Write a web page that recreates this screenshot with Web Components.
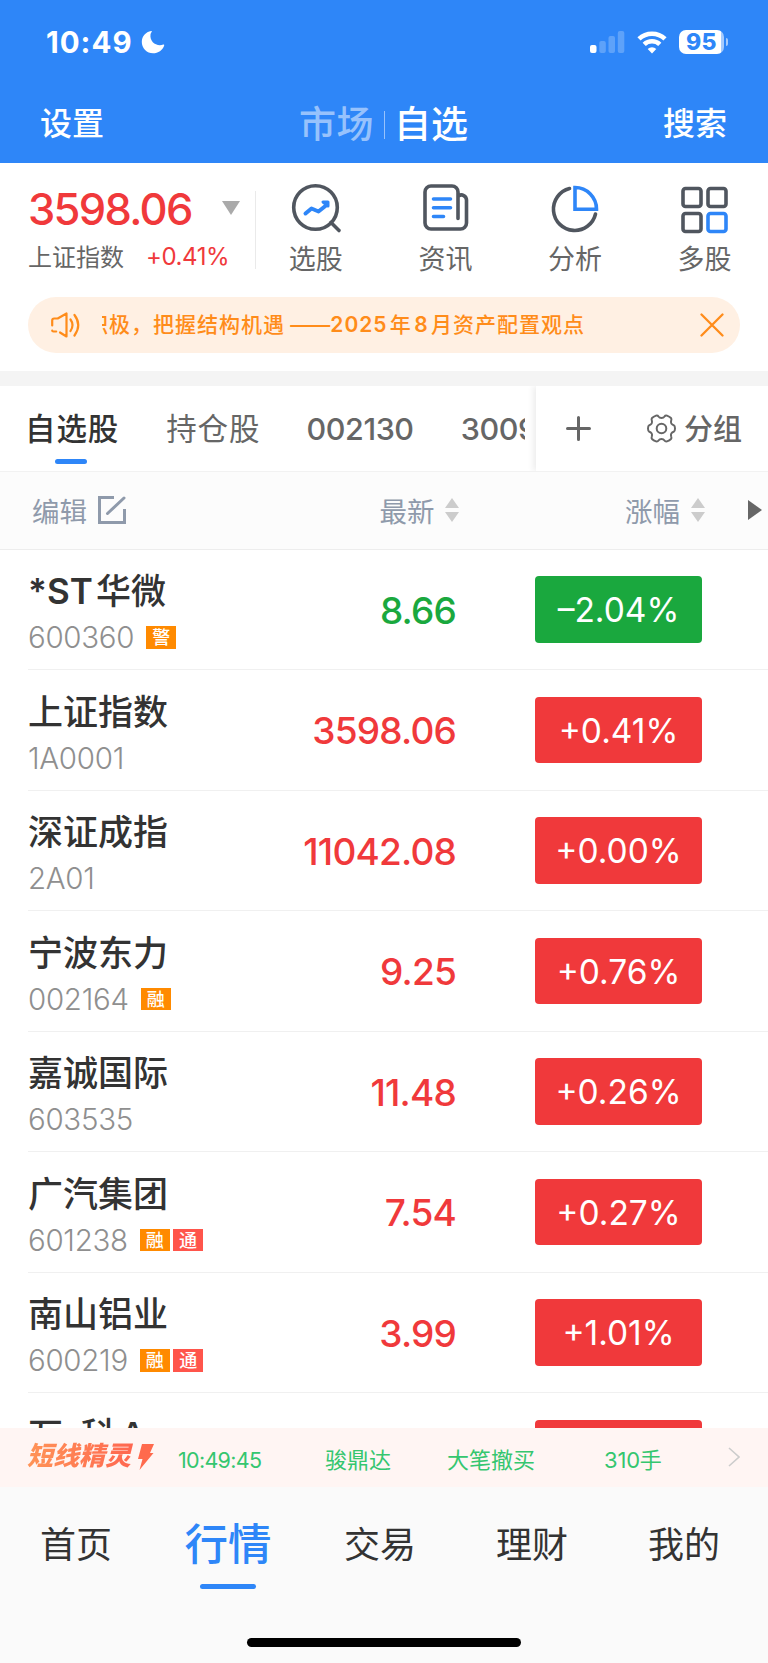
<!DOCTYPE html>
<html lang="zh-CN">
<head>
<meta charset="utf-8">
<title>自选</title>
<style>
  body {
    margin: 0;
    background: #fff;
    font-family: Inter, "Noto Sans CJK SC", sans-serif;
    color: #333;
  }
</style>
</head>
<body>
<stock-app></stock-app>

<script>
"use strict";

// Attach an open shadow root filled from a template
function render(host, html) {
  const template = document.createElement("template");
  template.innerHTML = html;
  host.attachShadow({ mode: "open" });
  host.shadowRoot.appendChild(template.content.cloneNode(true));
}

class StatusBar extends HTMLElement {
  constructor() {
    super();
    render(this, `
      <style>
      :host {
        display: flex;
        align-items: center;
        height: 84px;
        padding: 0 40px 0 46px;
        box-sizing: border-box;
        color: #fff;
      }
      #time {
        font-size: 29.500px;
        font-weight: 700;
        line-height: 36px;
        letter-spacing: 1px;
        margin-right: 8px;
      }
      #icons {
        display: flex;
        align-items: center;
        margin-left: auto;
      }
      #signal { margin-right: 12px; }
      #wifi { margin-right: 12px; }
      #battery {
        width: 45px;
        height: 24px;
        border-radius: 7px;
        background: linear-gradient(90deg, #fff 42px, #a6cbfd 42px);
        color: #2e86f8;
        font-size: 23px;
        font-weight: 800;
        line-height: 24px;
        text-align: center;
        letter-spacing: 0.5px;
      }
      #cap {
        width: 2px;
        height: 8px;
        margin-left: 2px;
        border-radius: 0 3px 3px 0;
        background: #a6cbfd;
      }
      </style>
      <div id="time">10:49</div>
      <svg width="24" height="24" viewBox="0 0 24 24"><path d="M10.2 1C4.6 2 .8 6.500 .8 12a11.200 11.200 0 0 0 11.200 11.200c5.200 0 9.600-3.200 11.200-7.800.2-.7-.3-1-.9-.8C15.500 16.800 8.500 12 9.500 4.500c.1-.9.500-1.700 1.100-2.600.4-.6.200-1-.4-.9z" fill="#fff"/></svg>
      <div id="icons">
        <svg id="signal" width="35" height="22" viewBox="0 0 35 22" fill="#fff">
          <rect x="0" y="14" width="6.500" height="8" rx="2"/>
          <g opacity=".23">
            <rect x="9.300" y="10" width="6.500" height="12" rx="2"/>
            <rect x="18.500" y="5" width="6.500" height="17" rx="2"/>
            <rect x="27.800" y="0" width="6.500" height="22" rx="2"/>
          </g>
        </svg>
        <svg id="wifi" width="30" height="23" viewBox="0 0 30 23" fill="none" stroke="#fff" stroke-width="4.600">
          <path d="M2 7.900a18.800 18.800 0 0 1 26 0"/>
          <path d="M7.200 13.400a11.300 11.300 0 0 1 15.600 0"/>
          <path d="M15 22.500l-4.300-4.400a6.200 6.200 0 0 1 8.600 0z" fill="#fff" stroke="none"/>
        </svg>
        <div id="battery">95</div>
        <div id="cap"></div>
      </div>`);
  }
}

class TopNav extends HTMLElement {
  constructor() {
    super();
    render(this, `
      <style>
      :host {
        display: flex;
        align-items: center;
        justify-content: space-between;
        height: 79px;
        padding: 1px 41px 0 40px;
        box-sizing: border-box;
        color: #fff;
        font-weight: 500;
        font-size: 32px;
        line-height: 48px;
      }
      #switch {
        display: flex;
        align-items: center;
        padding-top: 1px;
        font-size: 37px;
      }
      #market { color: #97c2fc; letter-spacing: 0.5px; }
      #line {
        width: 1px;
        height: 28px;
        margin: 0 9px 0 10px;
        background: #97c2fc;
      }
      </style>
      <div>设置</div>
      <div id="switch">
        <div id="market">市场</div>
        <div id="line"></div>
        <div>自选</div>
      </div>
      <div>搜索</div>`);
  }
}

class QuickLink extends HTMLElement {
  constructor() {
    super();
    render(this, `
      <style>
      :host {
        display: flex;
        flex-direction: column;
        align-items: center;
        width: 129.6px;
        font-size: 27px;
        line-height: 40px;
        color: #666;
      }
      ::slotted(svg) {
        display: block;
        width: 52px;
        height: 52px;
        margin-bottom: 5px;
        fill: none;
        stroke: #50565f;
        stroke-width: 3.6px;
        stroke-linecap: round;
        stroke-linejoin: round;
      }
      </style>
      <slot name="icon"></slot>
      <slot></slot>`);
  }
}

class MarketSummary extends HTMLElement {
  constructor() {
    super();
    render(this, `
      <style>
      :host {
        display: flex;
        height: 134px;
        padding-top: 20px;
        box-sizing: border-box;
        background: #fff;
      }
      #index {
        width: 227px;
        padding-left: 28px;
        border-right: 1px solid #eaeaea;
        height: 78px;
        margin-top: 8px;
        flex: none;
      }
      #value {
        display: flex;
        align-items: center;
        height: 36px;
        color: #f0393b;
        font-size: 43.500px;
        font-weight: 500;
        letter-spacing: -1.700px;
      }
      #value svg { margin: 0 15px 3px auto; }
      #name {
        display: flex;
        align-items: center;
        height: 28px;
        margin-top: 14px;
        font-size: 24px;
        color: #666;
      }
      #name span {
        margin: 2px 0 0 22px;
        color: #f0393b;
        letter-spacing: -0.4px;
      }
      #links { display: flex; margin-left: -5px; }
      </style>
      <div id="index">
        <div id="value">3598.06<svg width="18" height="14"><path d="M0 0h18l-9 14z" fill="#aaa"/></svg></div>
        <div id="name">上证指数<span>+0.41%</span></div>
      </div>
      <div id="links">
        <quick-link>
          <svg slot="icon" viewBox="0 0 52 52"><circle cx="25.500" cy="24.500" r="21.800"/><path d="M41 39.500l8 8"/><path d="M15.500 30.500l6-5 7 3 7.500-6" stroke="#2e86f8" stroke-width="4"/><path d="M33 19h5v4z" stroke="#2e86f8" stroke-width="3"/></svg>
          选股
        </quick-link>
        <quick-link>
          <svg slot="icon" viewBox="0 0 52 52"><path d="M39 35.500V9a6 6 0 0 0-6-6H12a6 6 0 0 0-6 6v31a6 6 0 0 0 6 6h29.500a6 6 0 0 0 6-6V17a5 5 0 0 0-8-4"/><path d="M14.500 16h17M14.500 24.700h17M14.500 33.500h10" stroke="#2e86f8"/></svg>
          资讯
        </quick-link>
        <quick-link>
          <svg slot="icon" viewBox="0 0 52 52"><path d="M20.500 5.500A21.300 21.300 0 1 0 46.500 31"/><path d="M26 4.500v21.800h21.500A21.500 21.500 0 0 0 26 4.500z" stroke="#2e86f8" stroke-linejoin="miter"/></svg>
          分析
        </quick-link>
        <quick-link>
          <svg slot="icon" viewBox="0 0 52 52"><rect x="4" y="5.500" width="18" height="18" rx="2.500"/><rect x="29" y="5.500" width="18" height="18" rx="2.500"/><rect x="4" y="30.500" width="18" height="18" rx="2.500"/><rect x="29" y="30.500" width="18" height="18" rx="2.500" stroke="#2e86f8"/></svg>
          多股
        </quick-link>
      </div>`);
  }
}

class NoticeBar extends HTMLElement {
  constructor() {
    super();
    render(this, `
      <style>
      :host {
        display: flex;
        align-items: center;
        height: 55.500px;
        margin: 0 28px 18.500px;
        padding: 0 16px 0 23px;
        box-sizing: border-box;
        border-radius: 28px;
        background: #fff0e3;
        color: #ff8c1a;
      }
      /* the message scrolls, so its first character is cut by the left edge */
      #clip {
        display: flex;
        width: 500px;
        margin-left: 22px;
        padding-top: 1px;
        overflow: hidden;
        white-space: pre;
        font-size: 21px;
        font-weight: 500;
        line-height: 32px;
        letter-spacing: 1px;
        word-spacing: -4.300px;
      }
      #text { margin-left: -15px; }
      #dash { letter-spacing: -2px; margin: 0 2px 0 3px; }
      .num { font-weight: 600; }
      #close { margin-left: auto; }
      </style>
      <svg width="29" height="26" viewBox="0 0 29 26" fill="none" stroke="#ff8c1a" stroke-width="2.200" stroke-linecap="round" stroke-linejoin="round">
        <path d="M1.200 13.500V8.500q0-2 2-2h3.500L15.500 1.500v23L9 20.500M1.200 18.500q0 1 1.300 1h2.700"/>
        <path d="M19.500 7.500q4 5.500 0 11.500M23.500 3q7.500 10 0 20.500"/>
      </svg>
      <div id="clip"><span id="text">积极，把握结构机遇 <span id="dash">——</span><span class="num">2025</span> 年 <span class="num">8</span> 月资产配置观点</span></div>
      <svg id="close" width="24" height="24" viewBox="0 0 24 24" stroke="#ff8c1a" stroke-width="2.300" stroke-linecap="round"><path d="M1.500 1.500l21 21M22.500 1.500l-21 21"/></svg>`);
  }
}

class GroupTabs extends HTMLElement {
  constructor() {
    super();
    render(this, `
      <style>
      :host {
        display: flex;
        height: 101px;
        border-top: 15px solid #f4f4f4;
        border-bottom: 1px solid #f2f2f2;
        box-sizing: border-box;
        font-size: 30.500px;
        color: #666;
      }
      #tabs {
        display: flex;
        width: 500px;
        padding-left: 25px;
        overflow: hidden;
        line-height: 86px;
        white-space: nowrap;
      }
      #tabs div { flex: none; font-weight: 500; letter-spacing: -0.4px; }
      #tabs .cjk { letter-spacing: 0.9px; font-weight: 400; }
      #tabs .active {
        display: flex;
        flex-direction: column;
        align-items: center;
        color: #333;
        font-weight: 500;
      }
      .active::after {
        content: "";
        width: 32px;
        height: 5px;
        margin: -13px 2px 0 0;
        border-radius: 3px;
        background: #2e86f8;
      }
      #tools {
        display: flex;
        align-items: center;
        width: 232px;
        margin-left: auto;
        padding: 0 26px 0 30px;
        box-sizing: border-box;
        box-shadow: -3px 0 6px rgba(0, 0, 0, 0.07);
        clip-path: inset(0 0 0 -12px);
      }
      #group {
        display: flex;
        align-items: center;
        gap: 8px;
        margin-left: auto;
        font-size: 29px;
        font-weight: 500;
        line-height: 84px;
      }
      #group span { padding-top: 2px; }
      </style>
      <div id="tabs">
        <div class="cjk active">自选股</div>
        <div class="cjk" style="margin-left: 47px">持仓股</div>
        <div style="margin-left: 46px">002130</div>
        <div style="margin-left: 47px">300999</div>
      </div>
      <div id="tools">
        <svg width="25" height="25" viewBox="0 0 25 25" stroke="#666" stroke-width="3" stroke-linecap="round"><path d="M12.500 1.500v22M1.500 12.500h22"/></svg>
        <div id="group">
          <svg width="29" height="29" viewBox="0 0 29 29" fill="none" stroke="#666" stroke-width="2" stroke-linejoin="round">
            <path d="M9 1.600Q10.700 1.200 11.500 2.500Q12.500 4 14.500 4T17.500 2.500Q18.300 1.200 20 1.600Q22.500 2.500 24 4Q24.800 5 24.200 6.500Q23.600 8.500 24.300 9.500Q25.200 10.800 26.700 11.200Q28 11.800 28 14.500T26.700 17.800Q25.200 18.200 24.300 19.500Q23.600 20.500 24.200 22.500Q24.800 24 24 25Q22.500 26.500 20 27.400Q18.300 27.800 17.500 26.500Q16.500 25 14.500 25T11.500 26.500Q10.700 27.800 9 27.400Q6.500 26.500 5 25Q4.200 24 4.800 22.500Q5.400 20.500 4.700 19.500Q3.800 18.200 2.300 17.800Q1 17.200 1 14.500T2.300 11.200Q3.800 10.800 4.700 9.500Q5.400 8.500 4.800 6.500Q4.200 5 5 4Q6.500 2.500 9 1.600z"/>
            <circle cx="14.500" cy="14.500" r="4.800"/>
          </svg>
          <span>分组</span>
        </div>
      </div>`);
  }
}

class ListHeader extends HTMLElement {
  constructor() {
    super();
    const sort = `<svg width="14" height="24" viewBox="0 0 14 24" fill="#ccc"><path d="M7 0l7 10H0zM7 24l7-10H0z"/></svg>`;
    render(this, `
      <style>
      :host {
        display: flex;
        align-items: center;
        height: 77.500px;
        border-bottom: 1.500px solid #ededed;
        padding: 0 6px 0 32px;
        box-sizing: border-box;
        background: #fcfcfc;
        color: #8f9aab;
        font-size: 27.500px;
        line-height: 40px;
      }
      div { display: flex; align-items: center; gap: 10.500px; }
      span { padding-top: 4px; }
      #last { margin-left: auto; }
      #change { margin-left: 166px; }
      #more { margin-left: 43.500px; }
      </style>
      <div><span>编辑</span>
        <svg width="28" height="28" viewBox="0 0 28 28" fill="none" stroke="#8f9aab" stroke-width="3"><path d="M16 1.500H1.500v25h25V13"/><path d="M9.500 17.500L26 2" stroke-linecap="round"/></svg>
      </div>
      <div id="last"><span>最新</span>${sort}</div>
      <div id="change"><span>涨幅</span>${sort}</div>
      <svg id="more" width="14" height="20"><path d="M0 0l14 10L0 20z" fill="#666"/></svg>`);
  }
}

class StockRow extends HTMLElement {
  connectedCallback() {
    const code = this.getAttribute("code") || "";
    const price = this.getAttribute("price") || "";
    const change = this.getAttribute("change") || "";
    const color = change[0] === "-" ? "#1aa83e" : "#f0393b";
    const tags = (this.getAttribute("tags") || "").split("").map(t =>
      `<i class="${t === "通" ? "red" : ""}">${t}</i>`).join("");
    render(this, `
      <style>
      :host {
        display: flex;
        align-items: center;
        height: 120.500px;
        margin-left: 28px;
        padding-right: 66px;
        border-bottom: 1px solid #f0f0f0;
        box-sizing: border-box;
      }
      #stock { width: 200px; padding-top: 5px; }
      #name {
        height: 46px;
        font-size: 35px;
        font-weight: 500;
        line-height: 46px;
        white-space: nowrap;
        word-spacing: -6px;
      }
      ::slotted(b) { font-weight: 600; }
      #code {
        display: flex;
        align-items: center;
        height: 36px;
        margin-top: 5px;
        font-size: 29.500px;
        font-weight: 300;
        letter-spacing: -0.3px;
        color: #8f8f8f;
      }
      i {
        width: 30px;
        height: 22.500px;
        margin-right: 3.300px;
        background: #ff8a00;
        color: #fff;
        font-size: 18px;
        font-style: normal;
        font-weight: 500;
        letter-spacing: 0;
        line-height: 23px;
        text-align: center;
      }
      #code span { margin-right: 12px; }
      .red { background: #ff554b; }
      #price {
        flex: 1;
        padding-top: 2px;
        text-align: right;
        color: ${color};
        font-size: 37px;
        font-weight: 500;
        letter-spacing: -0.8px;
      }
      #change {
        width: 167px;
        height: 66.500px;
        margin-left: 79px;
        border-radius: 4px;
        background: ${color};
        color: #fff;
        font-size: 33.500px;
        font-weight: 400;
        line-height: 68px;
        text-align: center;
      }
      </style>
      <div id="stock">
        <div id="name"><slot></slot></div>
        <div id="code"><span>${code}</span>${tags}</div>
      </div>
      <div id="price">${price}</div>
      <div id="change">${change.replace("-", "–")}</div>`);
  }
}

class StockList extends HTMLElement {
  constructor() {
    super();
    render(this, `
      <style>
      :host {
        display: block;
        height: 878.500px;
        overflow: hidden;
      }
      </style>
      <slot></slot>`);
  }
}

class TradeTicker extends HTMLElement {
  constructor() {
    super();
    render(this, `
      <style>
      :host {
        display: flex;
        align-items: center;
        height: 59px;
        padding: 0 28px;
        box-sizing: border-box;
        background: #fff5f3;
        color: #35c66f;
        font-size: 22px;
        line-height: 32px;
      }
      #brand {
        width: 107px;
        margin: 0 4px 3px -1px;
        font-size: 26px;
        font-weight: 900;
        font-style: italic;
        white-space: nowrap;
        background: linear-gradient(90deg, #ff9457, #ff6650);
        -webkit-background-clip: text;
        background-clip: text;
        color: transparent;
      }
      #bolt { margin-bottom: 2px; }
      #time {
        width: 147px;
        margin: 4px 0 0 24px;
        font-size: 21.500px;
        letter-spacing: -0.7px;
      }
      #stock { width: 122px; margin-top: 4px; }
      #action { width: 157px; margin-top: 4px; }
      #lots { margin-top: 4px; letter-spacing: -0.2px; }
      #arrow { margin-left: auto; margin-bottom: 2px; }
      </style>
      <div id="brand">短线精灵</div>
      <svg id="bolt" width="16" height="27" viewBox="0 0 16 27"><path d="M4 1h12l-4 9h3.500L1.500 27 4.500 16H0z" fill="#ff6a4d"/></svg>
      <div id="time">10:49:45</div>
      <div id="stock">骏鼎达</div>
      <div id="action">大笔撤买</div>
      <div id="lots">310手</div>
      <svg id="arrow" width="12" height="20" viewBox="0 0 12 20" fill="none" stroke="#ccc" stroke-width="1.600"><path d="M1 1l10 9-10 9"/></svg>`);
  }
}

class BottomNav extends HTMLElement {
  constructor() {
    super();
    render(this, `
      <style>
      :host {
        display: flex;
        flex-direction: column;
        justify-content: space-between;
        align-items: center;
        height: 176px;
        padding-bottom: 16px;
        box-sizing: border-box;
        background: #fafafa;
      }
      #items {
        display: flex;
        align-self: stretch;
        padding-right: 8px;
        font-size: 36px;
        line-height: 54px;
      }
      #items div {
        flex: 1;
        display: flex;
        flex-direction: column;
        align-items: center;
        padding-top: 30.500px;
      }
      #items .active {
        padding-top: 29.500px;
        color: #2e86f8;
        font-size: 43.500px;
        font-weight: 500;
      }
      .active::after {
        content: "";
        width: 56px;
        height: 5.500px;
        margin-top: 13px;
        border-radius: 3px;
        background: #2e86f8;
      }
      #home {
        width: 274px;
        height: 9px;
        border-radius: 5px;
        background: #000;
      }
      </style>
      <div id="items">
        <div>首页</div>
        <div class="active">行情</div>
        <div>交易</div>
        <div>理财</div>
        <div>我的</div>
      </div>
      <div id="home"></div>`);
  }
}

class StockApp extends HTMLElement {
  constructor() {
    super();
    render(this, `
      <style>
      :host {
        display: block;
        width: 768px;
        height: 1663px;
        overflow: hidden;
      }
      header { background: #2e86f8; }
      </style>
      <header>
        <status-bar></status-bar>
        <top-nav></top-nav>
      </header>
      <market-summary></market-summary>
      <notice-bar></notice-bar>
      <group-tabs></group-tabs>
      <list-header></list-header>
      <stock-list>
        <stock-row code="600360" tags="警" price="8.66" change="-2.04%"><b>*ST</b> 华微</stock-row>
        <stock-row code="1A0001" price="3598.06" change="+0.41%">上证指数</stock-row>
        <stock-row code="2A01" price="11042.08" change="+0.00%">深证成指</stock-row>
        <stock-row code="002164" tags="融" price="9.25" change="+0.76%">宁波东力</stock-row>
        <stock-row code="603535" price="11.48" change="+0.26%">嘉诚国际</stock-row>
        <stock-row code="601238" tags="融通" price="7.54" change="+0.27%">广汽集团</stock-row>
        <stock-row code="600219" tags="融通" price="3.99" change="+1.01%">南山铝业</stock-row>
        <stock-row>万&ensp;科Ａ</stock-row>
      </stock-list>
      <trade-ticker></trade-ticker>
      <bottom-nav></bottom-nav>`);
  }
}

window.customElements.define("status-bar", StatusBar);
window.customElements.define("top-nav", TopNav);
window.customElements.define("quick-link", QuickLink);
window.customElements.define("market-summary", MarketSummary);
window.customElements.define("notice-bar", NoticeBar);
window.customElements.define("group-tabs", GroupTabs);
window.customElements.define("list-header", ListHeader);
window.customElements.define("stock-row", StockRow);
window.customElements.define("stock-list", StockList);
window.customElements.define("trade-ticker", TradeTicker);
window.customElements.define("bottom-nav", BottomNav);
window.customElements.define("stock-app", StockApp);
</script>
</body>
</html>
